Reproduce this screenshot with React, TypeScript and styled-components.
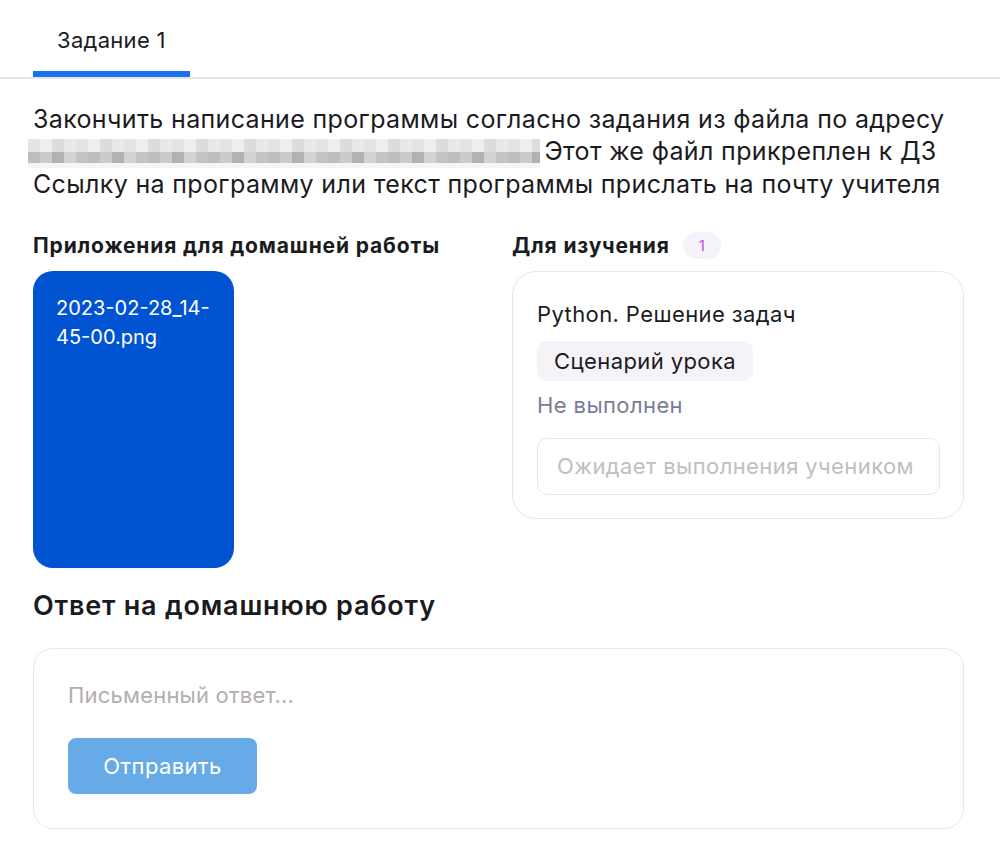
import React from 'react';
import styled, { createGlobalStyle } from 'styled-components';

const GlobalStyle = createGlobalStyle`
  html, body {
    margin: 0;
    padding: 0;
    background: #ffffff;
  }
  body {
    font-family: Inter, 'Noto Sans', sans-serif;
    color: #1b1b1f;
  }
`;

const Page = styled.div`
  width: 1000px;
  min-height: 857px;
  background: #fff;
`;

const TabBar = styled.nav`
  display: flex;
  padding: 0 33px;
  border-bottom: 2px solid #e6e6e8;
`;

const Tab = styled.div<{ $active?: boolean }>`
  height: 77px;
  box-sizing: border-box;
  padding: 8px 24px 0;
  display: flex;
  align-items: center;
  font-size: 22px;
  letter-spacing: 0.3px;
  color: #1b1b1f;
  border-bottom: 6px solid ${p => (p.$active ? '#1773ed' : 'transparent')};
`;

const Content = styled.main`
  padding: 24px 36px 0 33px;
`;

const Description = styled.p`
  margin: 0;
  font-size: 25px;
  letter-spacing: 0.35px;
  line-height: 32px;
  color: #1b1b1f;
`;

// mosaic placeholder for the hidden link
const Blurred = styled.span`
  display: inline-block;
  vertical-align: middle;
  width: 512px;
  height: 29px;
  margin-left: -5px;
  margin-right: -3px;
  background:
    repeating-linear-gradient(90deg, #e4e4e6 0 12px, #eeeeef 12px 24px, #dcdcde 24px 36px, #e9e8ea 36px 48px) 0 0 / 100% 13px no-repeat,
    repeating-linear-gradient(90deg, #bebdbf 0 12px, #cbcbcd 12px 24px, #b2b2b4 24px 36px, #d3d2d4 36px 48px, #c4c3c5 48px 60px) 0 13px / 100% 11px no-repeat,
    #f5f5f6;
  filter: blur(0.6px);
`;

const Columns = styled.div`
  display: grid;
  grid-template-columns: 455px 452px;
  column-gap: 24px;
  margin-top: 32px;
`;

const Column = styled.section`
  display: flex;
  flex-direction: column;
  gap: 12px;
`;

const SectionHead = styled.div`
  display: flex;
  align-items: center;
  gap: 13px;
  height: 27px;
`;

const SectionTitle = styled.h3`
  margin: 0;
  font-size: 21px;
  letter-spacing: 0.85px;
  font-weight: 700;
  color: #1b1b1f;
`;

const CountBadge = styled.span`
  display: inline-flex;
  align-items: center;
  justify-content: center;
  min-width: 38px;
  height: 27px;
  border-radius: 14px;
  background: #f5f3f9;
  color: #c24fdc;
  font-size: 15px;
`;

const AttachmentCard = styled.div`
  width: 201px;
  height: 297px;
  box-sizing: border-box;
  padding: 23px 23px;
  border-radius: 20px;
  background: #0053d1;
  color: #fff;
  font-size: 20px;
  line-height: 29px;
  word-break: break-word;
`;

const StudyCard = styled.div`
  box-sizing: border-box;
  height: 248px;
  border: 1px solid #e8e6f0;
  border-radius: 24px;
  padding: 28px 23px 0 24px;
  display: flex;
  flex-direction: column;
  align-items: flex-start;
  font-size: 22px;
  letter-spacing: 0.4px;
`;

const LessonTitle = styled.div`
  line-height: 28px;
`;

const Chip = styled.div`
  margin-top: 13px;
  height: 40px;
  padding: 0 17px;
  display: flex;
  align-items: center;
  border-radius: 10px;
  background: #f5f3f8;
`;

const Status = styled.div`
  margin-top: 10px;
  line-height: 28px;
  color: #7b7b96;
`;

const WaitField = styled.div`
  margin-top: 19px;
  align-self: stretch;
  height: 57px;
  box-sizing: border-box;
  border: 1px solid #e8e6f0;
  border-radius: 10px;
  padding: 0 19px;
  display: flex;
  align-items: center;
  color: #c2bebe;
`;

const AnswerTitle = styled.h2`
  margin: 22px 0 0;
  font-size: 27px;
  letter-spacing: 0.8px;
  line-height: 32px;
  font-weight: 600;
  color: #1b1b1f;
`;

const AnswerCard = styled.div`
  margin-top: 26px;
  box-sizing: border-box;
  height: 181px;
  border: 1px solid #e8e6f0;
  border-radius: 20px;
  padding: 32px 34px 0;
  display: flex;
  flex-direction: column;
  align-items: flex-start;
`;

const AnswerInput = styled.textarea`
  border: none;
  outline: none;
  resize: none;
  padding: 0;
  width: 100%;
  height: 28px;
  font-family: inherit;
  font-size: 22px;
  letter-spacing: 0.2px;
  line-height: 28px;
  color: #1b1b1f;
  background: transparent;
  &::placeholder {
    color: #b3aeae;
  }
`;

const SendButton = styled.button`
  margin-top: 29px;
  width: 189px;
  height: 56px;
  border: none;
  border-radius: 8px;
  background: #66abe8;
  color: #fff;
  font-family: inherit;
  font-size: 22px;
  letter-spacing: 0.4px;
  cursor: pointer;
`;

export default function App() {
  return (
    <Page>
      <GlobalStyle />
      <TabBar>
        <Tab $active>Задание 1</Tab>
      </TabBar>
      <Content>
        <Description>
          Закончить написание программы согласно задания из файла по адресу{' '}
          <Blurred /> Этот же файл прикреплен к ДЗ
          <br />
          Ссылку на программу или текст программы прислать на почту учителя
        </Description>

        <Columns>
          <Column>
            <SectionHead>
              <SectionTitle>Приложения для домашней работы</SectionTitle>
            </SectionHead>
            <AttachmentCard>2023-02-28_14-45-00.png</AttachmentCard>
          </Column>
          <Column>
            <SectionHead>
              <SectionTitle>Для изучения</SectionTitle>
              <CountBadge>1</CountBadge>
            </SectionHead>
            <StudyCard>
              <LessonTitle>Python. Решение задач</LessonTitle>
              <Chip>Сценарий урока</Chip>
              <Status>Не выполнен</Status>
              <WaitField>Ожидает выполнения учеником</WaitField>
            </StudyCard>
          </Column>
        </Columns>

        <AnswerTitle>Ответ на домашнюю работу</AnswerTitle>
        <AnswerCard>
          <AnswerInput placeholder="Письменный ответ..." />
          <SendButton>Отправить</SendButton>
        </AnswerCard>
      </Content>
    </Page>
  );
}
